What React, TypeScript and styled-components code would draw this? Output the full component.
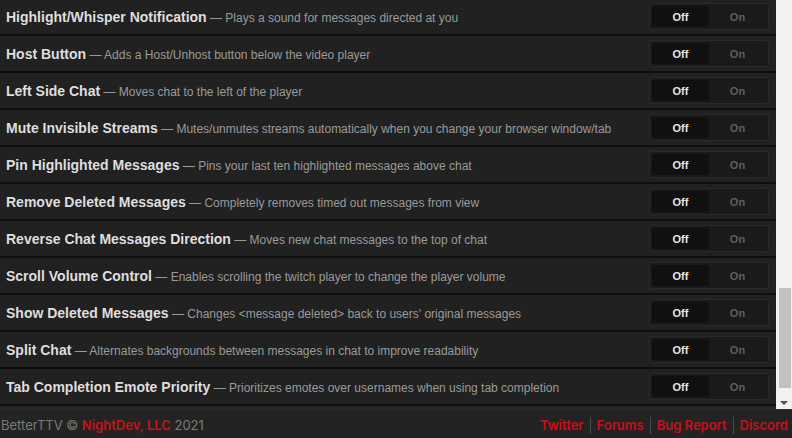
import React from "react";
import styled, { createGlobalStyle } from "styled-components";

const Global = createGlobalStyle`
  html, body { margin: 0; padding: 0; background: #1f1f1f; }
  body { width: 792px; height: 438px; overflow: hidden; font-family: "Liberation Sans", Arial, sans-serif; }
  * { box-sizing: border-box; }
`;

const Page = styled.div`
  width: 792px;
  height: 438px;
  display: flex;
  flex-direction: column;
  background: #1f1f1f;
`;

const Main = styled.div`
  display: flex;
  height: 409px;
`;

const List = styled.div`
  flex: 1;
  display: flex;
  flex-direction: column;
  justify-content: flex-end;
  overflow: hidden;
  padding-bottom: 3px;
  background: #262626;
`;

const Row = styled.div`
  flex: 0 0 37px;
  display: flex;
  align-items: center;
  justify-content: space-between;
  padding: 0 7px 0 6px;
  background: #212121;
  border-bottom: 2px solid #0f0f0f;
`;

const Label = styled.div`
  white-space: nowrap;
  color: #9a9a9a;
  font-size: 12px;
`;

const Title = styled.span`
  color: #dedede;
  font-weight: bold;
  font-size: 14px;
`;

const Toggle = styled.div`
  display: flex;
  width: 120px;
  height: 27px;
  padding: 2px;
  background: #1a1a1a;
  border: 1px solid #2a2a2a;
  border-radius: 3px;
`;

const Option = styled.div<{ $active?: boolean }>`
  flex: 1;
  display: flex;
  align-items: center;
  justify-content: center;
  font-size: 11px;
  font-weight: bold;
  border-radius: 2px;
  color: ${(p) => (p.$active ? "#e6e6e6" : "#5e5e5e")};
  background: ${(p) => (p.$active ? "#101010" : "transparent")};
`;

const Track = styled.div`
  width: 16px;
  background: #f1f1f1;
  display: flex;
  flex-direction: column;
  align-items: center;
  padding-top: 288px;
`;

const Thumb = styled.div`
  width: 12px;
  margin-left: 2px;
  height: 100px;
  background: #c1c1c1;
`;

const Arrow = styled.div`
  margin-top: 13px;
  width: 0;
  height: 0;
  border-left: 4px solid transparent;
  border-right: 4px solid transparent;
  border-top: 4px solid #505050;
`;

const Footer = styled.footer`
  flex: 1;
  display: flex;
  align-items: center;
  justify-content: space-between;
  padding: 2px 4px 0 1px;
  background: #232323;
  border-top: 1px solid #2c2c2c;
  font-family: Inter, "Noto Sans", sans-serif;
  font-size: 13px;
  color: #7a7a7a;
`;

const Red = styled.span`
  color: #c8101a;
  font-weight: 600;
`;

const Links = styled.div`
  display: flex;
  align-items: center;
`;

const Sep = styled.span`
  width: 1px;
  height: 17px;
  background: #4a4a4a;
  margin: 0 6px;
`;

const rows: [string, string][] = [
  ["Highlight/Whisper Notification", "Plays a sound for messages directed at you"],
  ["Host Button", "Adds a Host/Unhost button below the video player"],
  ["Left Side Chat", "Moves chat to the left of the player"],
  ["Mute Invisible Streams", "Mutes/unmutes streams automatically when you change your browser window/tab"],
  ["Pin Highlighted Messages", "Pins your last ten highlighted messages above chat"],
  ["Remove Deleted Messages", "Completely removes timed out messages from view"],
  ["Reverse Chat Messages Direction", "Moves new chat messages to the top of chat"],
  ["Scroll Volume Control", "Enables scrolling the twitch player to change the player volume"],
  ["Show Deleted Messages", "Changes <message deleted> back to users' original messages"],
  ["Split Chat", "Alternates backgrounds between messages in chat to improve readability"],
  ["Tab Completion Emote Priority", "Prioritizes emotes over usernames when using tab completion"],
];

const links = ["Twitter", "Forums", "Bug Report", "Discord"];

export default function App() {
  return (
    <Page>
      <Global />
      <Main>
        <List>
          {rows.map(([t, d]) => (
            <Row key={t}>
              <Label>
                <Title>{t}</Title> — {d}
              </Label>
              <Toggle>
                <Option $active>Off</Option>
                <Option>On</Option>
              </Toggle>
            </Row>
          ))}
        </List>
        <Track>
          <Thumb />
          <Arrow />
        </Track>
      </Main>
      <Footer>
        <div>
          BetterTTV © <Red>NightDev, LLC</Red> 2021
        </div>
        <Links>
          {links.map((l, i) => (
            <React.Fragment key={l}>
              {i > 0 && <Sep />}
              <Red>{l}</Red>
            </React.Fragment>
          ))}
        </Links>
      </Footer>
    </Page>
  );
}
